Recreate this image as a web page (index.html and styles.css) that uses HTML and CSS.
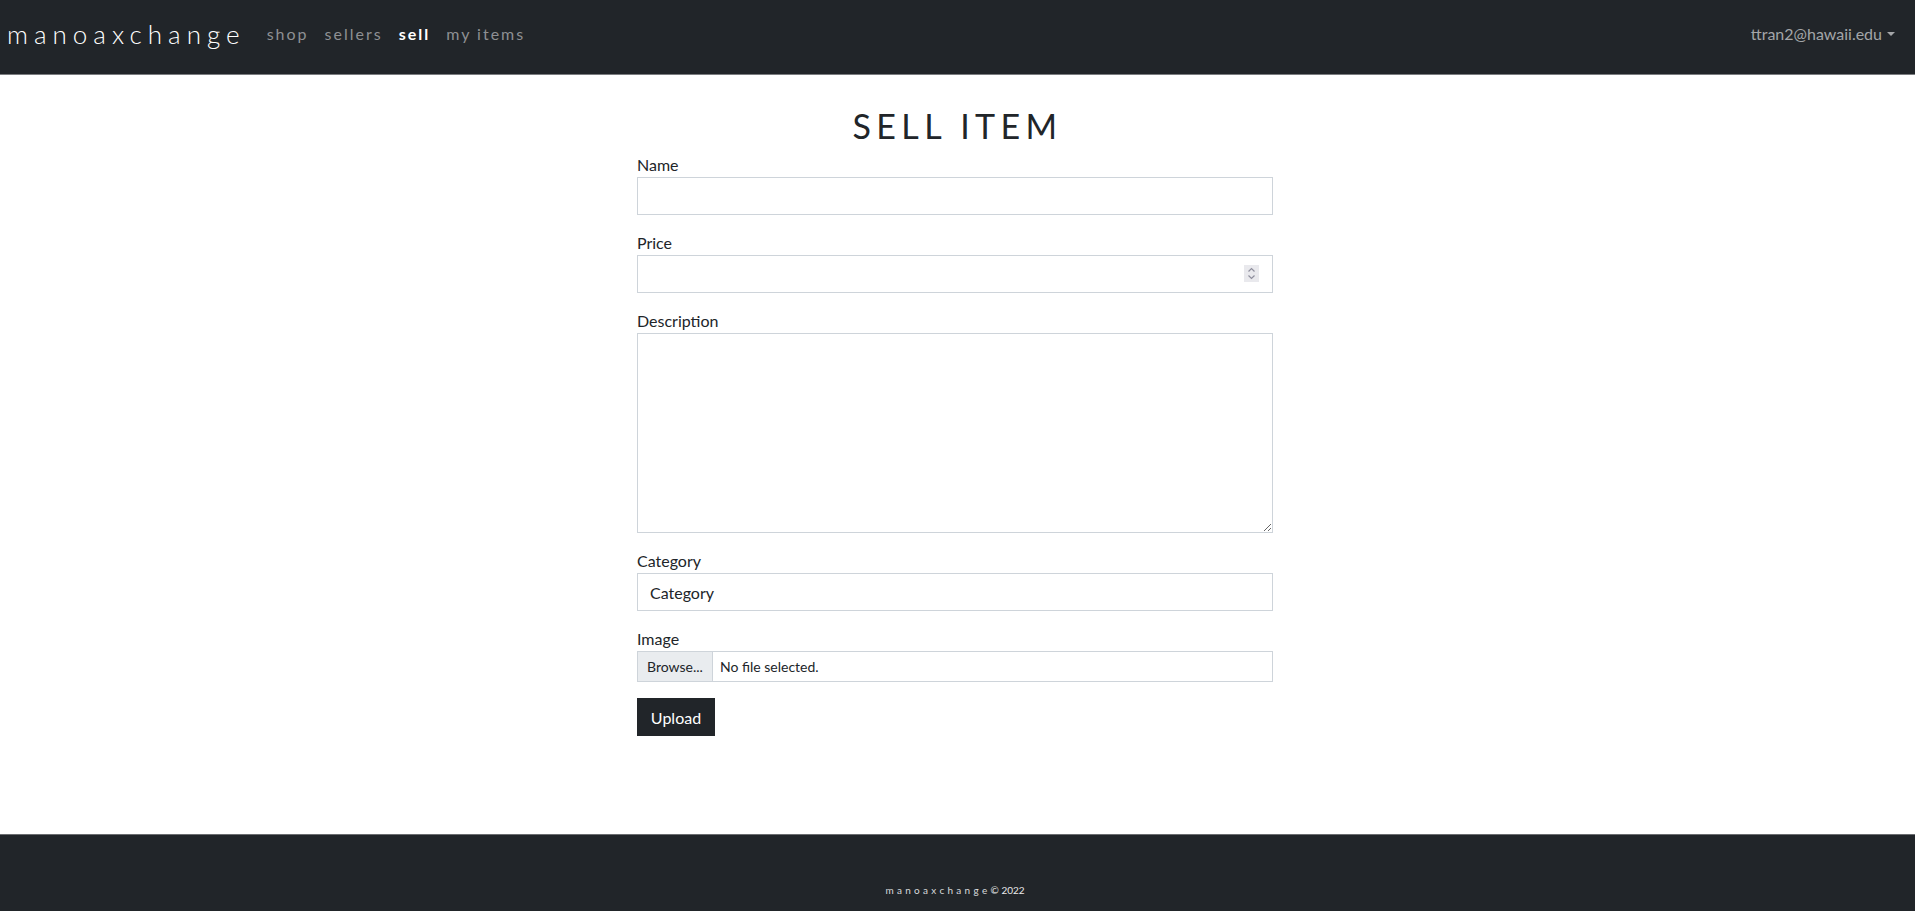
FILE: index.html
```html
<!DOCTYPE html>
<html lang="en">
<head>
<meta charset="utf-8">
<title>Sell Item - manoaxchange</title>
<link rel="stylesheet" href="styles.css">
</head>
<body>
<nav class="navbar">
  <div class="nav-left">
    <a class="brand" href="#">manoaxchange</a>
    <a class="nav-link" href="#">shop</a>
    <a class="nav-link" href="#">sellers</a>
    <a class="nav-link active" href="#">sell</a>
    <a class="nav-link" href="#">my items</a>
  </div>
  <a class="user" href="#">ttran2@hawaii.edu<span class="caret"></span></a>
</nav>
<main class="page">
  <div class="form-wrap">
    <h2 class="title">SELL ITEM</h2>
    <form class="form">
      <div class="field">
        <label class="label">Name</label>
        <input class="control" type="text">
      </div>
      <div class="field">
        <label class="label">Price</label>
        <div class="number">
          <input class="control" type="text">
          <span class="spinner">
            <svg width="15" height="17" viewBox="0 0 15 17"><path d="M4.5 6.5 L7.5 3.5 L10.5 6.5" fill="none" stroke="#8f8f9d" stroke-width="1.2"/><path d="M4.5 10.5 L7.5 13.5 L10.5 10.5" fill="none" stroke="#8f8f9d" stroke-width="1.2"/></svg>
          </span>
        </div>
      </div>
      <div class="field">
        <label class="label">Description</label>
        <textarea class="control textarea"></textarea>
      </div>
      <div class="field">
        <label class="label">Category</label>
        <div class="control select">Category</div>
      </div>
      <div class="field">
        <label class="label">Image</label>
        <div class="file">
          <span class="browse">Browse...</span>
          <span class="file-name">No file selected.</span>
        </div>
      </div>
      <button class="btn" type="button">Upload</button>
    </form>
  </div>
</main>
<footer class="footer">
  <span class="foot-brand">manoaxchange</span><span class="foot-copy">© 2022</span>
</footer>
</body>
</html>
```
FILE: styles.css
```css
* { box-sizing: border-box; }
html, body { margin: 0; padding: 0; }
body {
  font-family: Lato, "Liberation Sans", sans-serif;
  font-size: 16px;
  color: #212529;
  background: #fff;
  min-height: 100vh;
  display: flex;
  flex-direction: column;
}
a { text-decoration: none; }

.navbar {
  height: 75px;
  background: #212529;
  border-bottom: 1px solid #7b7d80;
  display: flex;
  align-items: center;
  justify-content: space-between;
  padding: 0 20px 7px 7px;
}
.nav-left { display: flex; align-items: center; }
.brand {
  font-family: Lato, sans-serif;
  font-weight: 300;
  font-size: 26px;
  letter-spacing: 6px;
  color: #fff;
  margin-right: 13px;
}
.nav-link {
  color: #8e9093;
  font-size: 16px;
  letter-spacing: 2px;
  padding: 0 8px;
}
.nav-link.active { color: #fff; font-weight: 700; }
.user {
  color: #a3a5a8;
  font-size: 16px;
  display: flex;
  align-items: center;
}
.caret {
  display: inline-block;
  margin-left: 5px;
  width: 0; height: 0;
  border-left: 4px solid transparent;
  border-right: 4px solid transparent;
  border-top: 4.5px solid #a3a5a8;
  margin-top: 1px;
}

.page {
  flex: 1;
  display: flex;
  justify-content: center;
  padding: 31px 5px 0 0;
}
.form-wrap { width: 636px; }
.title {
  margin: 0 0 7px;
  height: 40px;
  line-height: 40px;
  font-size: 34px;
  font-weight: 400;
  letter-spacing: 5.4px;
  text-align: center;
  padding-left: 5px;
}
.field { margin-bottom: 16px; }
.label { display: block; line-height: 24px; }
.control {
  display: block;
  width: 100%;
  height: 38px;
  border: 1px solid #ced4da;
  border-radius: 0;
  background: #fff;
  font-family: Lato, sans-serif;
  font-size: 16px;
  color: #212529;
  padding: 0 12px;
  outline: none;
}
.number { position: relative; }
.spinner {
  position: absolute;
  right: 14px;
  top: 10px;
  width: 15px;
  height: 17px;
  background: #e9e9ed;
  display: flex;
}
.textarea { height: 200px; resize: vertical; padding: 6px 12px; }
.select { display: flex; align-items: center; }
.file {
  display: flex;
  height: 31px;
  border: 1px solid #ced4da;
  font-size: 14px;
}
.browse {
  background: #e9ecef;
  border-right: 1px solid #ced4da;
  width: 75px;
  display: flex;
  align-items: center;
  justify-content: center;
}
.file-name { display: flex; align-items: center; padding-left: 7px; }
.btn {
  display: block;
  height: 38px;
  width: 78px;
  background: #212529;
  border: 1px solid #212529;
  border-radius: 0;
  color: #fff;
  font-family: Lato, sans-serif;
  font-size: 16px;
  padding: 0;
}

.footer {
  height: 77px;
  background: #212529;
  border-top: 1px solid #6b6d70;
  display: flex;
  justify-content: center;
  align-items: flex-start;
  padding: 48px 5px 0 0;
  line-height: 14px;
}
.foot-brand {
  font-family: Lato, sans-serif;
  font-size: 10px;
  letter-spacing: 3.3px;
  color: #d8dadc;
}
.foot-copy { font-size: 10px; color: #e8e8e8; }
```
